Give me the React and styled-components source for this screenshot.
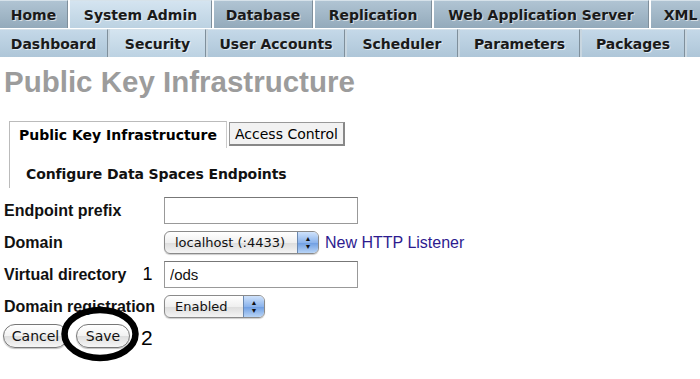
import styled, { createGlobalStyle } from "styled-components"

const Global = createGlobalStyle`
  body {
    margin: 0;
    background: #fff;
    font-family: "DejaVu Sans", Verdana, sans-serif;
  }
`

const mainTabs = [
  { label: "Home", w: 68 },
  { label: "System Admin", w: 142, active: true },
  { label: "Database", w: 99 },
  { label: "Replication", w: 117 },
  { label: "Web Application Server", w: 215 },
  { label: "XML", w: 60 },
]

const subTabs = [
  { label: "Dashboard", w: 108 },
  { label: "Security", w: 96, active: true },
  { label: "User Accounts", w: 137 },
  { label: "Scheduler", w: 111 },
  { label: "Parameters", w: 120 },
  { label: "Packages", w: 103 },
  { label: "Events", w: 80 },
]

export default function App() {
  return (
    <Page>
      <Global />
      <TabBar>
        {mainTabs.map(t => (
          <Tab key={t.label} $w={t.w} $active={t.active}>{t.label}</Tab>
        ))}
      </TabBar>
      <TabBar $sub>
        {subTabs.map(t => (
          <Tab key={t.label} $w={t.w} $active={t.active} $sub>{t.label}</Tab>
        ))}
      </TabBar>

      <Title>Public Key Infrastructure</Title>

      <Panel>
        <PanelTabs>
          <PanelTab $active>Public Key Infrastructure</PanelTab>
          <PanelTab>Access Control</PanelTab>
        </PanelTabs>
        <PanelBody>
          <Heading>Configure Data Spaces Endpoints</Heading>
        </PanelBody>
      </Panel>

      <Form>
        <Label>Endpoint prefix</Label>
        <Field><TextBox /></Field>

        <Label>Domain</Label>
        <Field>
          <Select $w={155}>
            <SelectText>localhost (:4433)</SelectText>
            <Arrows>▲<br />▼</Arrows>
          </Select>
          <Link href="#">New HTTP Listener</Link>
        </Field>

        <Label>Virtual directory <Mark>1</Mark></Label>
        <Field><TextBox defaultValue="/ods" /></Field>

        <Label>Domain registration</Label>
        <Field>
          <Select $w={101}>
            <SelectText>Enabled</SelectText>
            <Arrows>▲<br />▼</Arrows>
          </Select>
        </Field>

        <Buttons>
          <Button $w={65}>Cancel</Button>
          <Button $w={54}>Save</Button>
          <Mark $big>2</Mark>
          <Circle width="90" height="70" viewBox="0 0 90 70">
            <ellipse cx="45" cy="35" rx="35.5" ry="24" fill="none" stroke="#000" strokeWidth="6.5" />
          </Circle>
        </Buttons>
      </Form>
    </Page>
  )
}

const Page = styled.div`
  width: 700px;
  height: 379px;
  overflow: hidden;
  position: relative;
`

const TabBar = styled.div`
  display: flex;
  gap: 2px;
  height: 28px;
  margin-top: ${({ $sub }) => ($sub ? "1px" : "0")};
  background: ${({ $sub }) => ($sub ? "#c8d6e0" : "#fff")};
  white-space: nowrap;
`

const Tab = styled.div`
  flex: 0 0 ${({ $w }) => $w}px;
  box-sizing: border-box;
  display: flex;
  align-items: center;
  justify-content: center;
  font-weight: bold;
  font-size: 14px;
  color: #1a1a1a;
  text-shadow: 1px 1px 0 rgba(255, 255, 255, 0.6);
  border-top: 1px solid #d6e2ea;
  border-right: 1px solid #7f8f9b;
  background: ${({ $active, $sub }) =>
    $active
      ? "linear-gradient(#d4e4f0, #bcd2e2)"
      : $sub
      ? "linear-gradient(#c4d8e8, #aec6d8)"
      : "linear-gradient(#b0c4d3, #93aabb)"};
`

const Title = styled.h1`
  margin: 8px 0 0 4px;
  font-family: "Liberation Sans", Arial, sans-serif;
  font-size: 29.5px;
  font-weight: bold;
  color: #9c9c9c;
  line-height: 34px;
`

const Panel = styled.div`
  margin: 22px 0 0 9px;
`

const PanelTabs = styled.div`
  display: flex;
  align-items: flex-start;
  gap: 2px;
`

const PanelTab = styled.div`
  box-sizing: border-box;
  height: ${({ $active }) => ($active ? "27px" : "24px")};
  padding: 0 ${({ $active }) => ($active ? "9px" : "5px")};
  display: flex;
  align-items: center;
  font-size: 14px;
  font-weight: ${({ $active }) => ($active ? "bold" : "normal")};
  color: #000;
  background: ${({ $active }) => ($active ? "#fff" : "#f2f2f2")};
  border: 1px solid ${({ $active }) => ($active ? "#bbb" : "#999")};
  border-bottom: ${({ $active }) => ($active ? "none" : "2px solid #888")};
  border-right: ${({ $active }) => ($active ? "1px solid #ccc" : "2px solid #888")};
  margin-top: ${({ $active }) => ($active ? "0" : "1px")};
`

const PanelBody = styled.div`
  border-left: 1px solid #bbb;
  padding: 18px 0 6px 16px;
`

const Heading = styled.div`
  font-family: "DejaVu Sans", Tahoma, sans-serif;
  font-size: 14px;
  font-weight: bold;
  color: #111;
  letter-spacing: -0.1px;
`

const Form = styled.div`
  margin: 9px 0 0 4px;
  display: grid;
  grid-template-columns: 160px auto;
  grid-auto-rows: auto;
  row-gap: 6px;
  font-family: "Liberation Sans", Arial, sans-serif;
`

const Label = styled.div`
  display: flex;
  align-items: center;
  font-size: 16px;
  font-weight: bold;
  color: #111;
  white-space: nowrap;
`

const Mark = styled.span`
  font-weight: normal;
  font-size: ${({ $big }) => ($big ? "21px" : "18px")};
  margin-left: ${({ $big }) => ($big ? "3px" : "16px")};
  margin-top: ${({ $big }) => ($big ? "3px" : "0")};
  color: #000;
`

const Field = styled.div`
  display: flex;
  align-items: center;
  gap: 6px;
  min-height: 25px;
`

const TextBox = styled.input`
  box-sizing: border-box;
  width: 194px;
  height: 27px;
  border: 1px solid #999;
  border-top-color: #777;
  padding: 0 5px;
  font-family: "Liberation Sans", Arial, sans-serif;
  font-size: 15px;
  color: #111;
  outline: none;
  background: #fff;
`

const Select = styled.div`
  box-sizing: border-box;
  width: ${({ $w }) => $w}px;
  height: 23px;
  display: flex;
  border: 1px solid #8a8a8a;
  border-radius: 6px;
  overflow: hidden;
  background: linear-gradient(#ffffff, #f0f0f0 50%, #dcdcdc 51%, #f4f4f4);
  box-shadow: 0 1px 1px rgba(0, 0, 0, 0.2);
`

const SelectText = styled.div`
  flex: 1;
  padding-left: 10px;
  display: flex;
  align-items: center;
  font-family: "DejaVu Sans", "Lucida Grande", sans-serif;
  font-size: 13px;
  color: #111;
`

const Arrows = styled.div`
  width: 20px;
  border-left: 1px solid #6a88b0;
  background: linear-gradient(#cfe2fb, #8cb4ec 50%, #6d9de2 51%, #b8d4f6);
  font-size: 7px;
  line-height: 8px;
  text-align: center;
  padding-top: 3px;
  color: #111;
`

const Link = styled.a`
  font-family: "Liberation Sans", Arial, sans-serif;
  font-size: 16px;
  color: #2d1b8f;
  text-decoration: none;
`

const Buttons = styled.div`
  grid-column: 1 / 3;
  position: relative;
  display: flex;
  align-items: center;
  gap: 8px;
  margin: -2px 0 0 -1px;
  height: 26px;
`

const Button = styled.button`
  box-sizing: border-box;
  width: ${({ $w }) => $w}px;
  height: 24px;
  border: 1px solid #777;
  border-radius: 12px;
  background: linear-gradient(#ffffff, #f2f2f2 50%, #dedede 51%, #f6f6f6);
  font-family: "DejaVu Sans", "Lucida Grande", sans-serif;
  font-size: 14px;
  color: #111;
  padding: 0;
  box-shadow: 0 1px 1px rgba(0, 0, 0, 0.25);
`

const Circle = styled.svg`
  position: absolute;
  left: 52px;
  top: -24px;
  pointer-events: none;
`
